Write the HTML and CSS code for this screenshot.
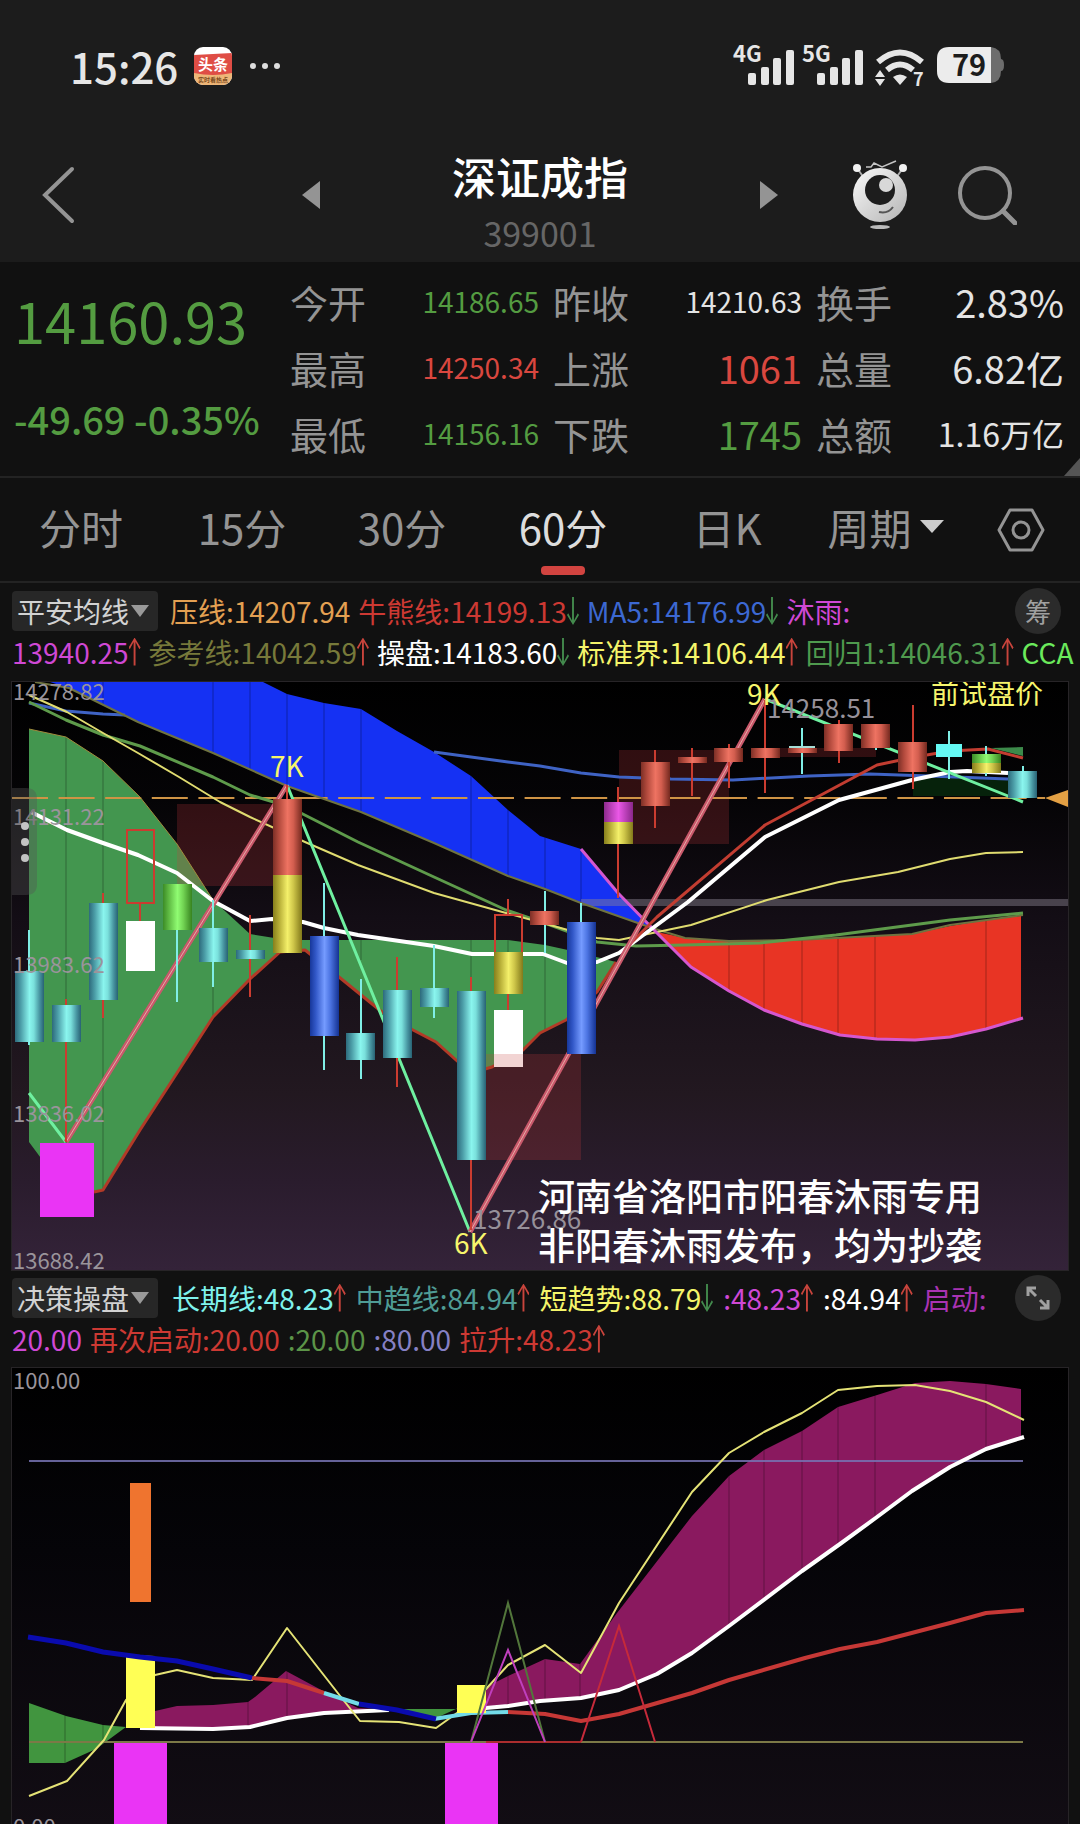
FILE: index.html
```html
<!DOCTYPE html>
<html lang="zh-CN">
<head>
<meta charset="utf-8">
<meta name="viewport" content="width=device-width, initial-scale=1">
<title>深证成指 399001</title>
<link rel="stylesheet" href="styles.css">
</head>
<body>
<header class="top">
  <div class="status">
    <div class="status-side">
      <span class="clock">15:26</span>
      <svg class="app-icon" width="38" height="38" viewBox="0 0 38 38" aria-hidden="true">
        <defs><clipPath id="app"><rect width="38" height="38" rx="9"/></clipPath></defs>
        <g clip-path="url(#app)">
          <rect width="38" height="38" fill="#fff"/>
          <path d="M0 8 38 6V28H0Z" fill="#df4d45"/>
          <path d="M0 26q19 4 38 0v12H0Z" fill="#eeb678"/>
          <text x="19" y="23" class="app-name">头条</text>
          <text x="19" y="35" class="app-sub">实时看热点</text>
        </g>
      </svg>
      <svg width="30" height="8" viewBox="0 0 30 8" fill="#ddd" aria-hidden="true"><circle cx="3" cy="4" r="3"/><circle cx="15" cy="4" r="3"/><circle cx="27" cy="4" r="3"/></svg>
    </div>
    <div class="status-side status-icons">
      <svg width="61" height="42" viewBox="0 0 61 42" fill="#e6e6e6"><text x="0" y="17" class="net">4G</text><rect x="15" y="28" width="8" height="12" rx="2"/><rect x="28" y="22" width="8" height="18" rx="2"/><rect x="40" y="13" width="8" height="27" rx="2"/><rect x="53" y="5" width="8" height="35" rx="2"/></svg>
      <svg width="61" height="42" viewBox="0 0 61 42" fill="#e6e6e6"><text x="0" y="17" class="net">5G</text><rect x="15" y="28" width="8" height="12" rx="2"/><rect x="28" y="22" width="8" height="18" rx="2"/><rect x="40" y="13" width="8" height="27" rx="2"/><rect x="53" y="5" width="8" height="35" rx="2"/></svg>
      <svg class="wifi" width="50" height="42" viewBox="0 0 50 42" fill="none" stroke="#e6e6e6" stroke-width="6"><path d="M3 17q22-19 44 0M12 25q13-11 26 0"/><path d="M18 32q7-5 14 0l-7 8Z" fill="#e6e6e6" stroke="none"/><path d="M0 32l5-7 5 7ZM0 34h10l-5 7Z" fill="#e6e6e6" stroke="none"/><text x="38" y="41" class="gen">7</text></svg>
      <svg width="67" height="42" viewBox="0 0 67 42"><path d="M54 2q10 1 10 12 3 0 3 6t-3 6q0 11-10 12Z" fill="#6d6d6d"/><path d="M12 2H54V38H12Q0 38 0 26V14Q0 2 12 2Z" fill="#ececec"/><text x="32" y="31" class="battery">79</text></svg>
    </div>
  </div>
  <div class="titlebar">
    <button class="icon-btn back" aria-label="返回"><svg width="34" height="60" viewBox="0 0 34 60" fill="none" stroke="#949494" stroke-width="4" stroke-linecap="round"><path d="M30 4 3 30 30 56"/></svg></button>
    <button class="icon-btn" aria-label="上一个"><svg width="18" height="28" viewBox="0 0 18 28"><path d="M18 0V28L0 14Z" fill="#949494"/></svg></button>
    <div class="heading"><h1>深证成指</h1><p>399001</p></div>
    <button class="icon-btn" aria-label="下一个"><svg width="18" height="28" viewBox="0 0 18 28"><path d="M0 0V28L18 14Z" fill="#949494"/></svg></button>
    <button class="icon-btn" aria-label="助手"><svg width="56" height="70" viewBox="0 0 56 70">
      <defs><linearGradient id="bot" x1="0" y1="0" x2="1" y2="1"><stop offset="0" stop-color="#fafafa"/><stop offset="1" stop-color="#b4b4b4"/></linearGradient></defs>
      <path d="M5 8 12 18M51 8 44 18" stroke="#aaa" stroke-width="2"/><circle cx="5" cy="8" r="4" fill="#f2f2f2"/><circle cx="51" cy="8" r="4" fill="#f2f2f2"/>
      <path d="M14 7l5 0 3-4 8 4 14-6" stroke="#c4c4c4" stroke-width="1.5" fill="none"/>
      <circle cx="28" cy="35" r="27" fill="url(#bot)"/><circle cx="28" cy="30" r="15" fill="#1d1d1d"/><circle cx="34" cy="25" r="7" fill="#d8d8d8"/>
      <path d="M27 52q9 2 14-5" stroke="#555" stroke-width="2" fill="none"/><ellipse cx="28" cy="67" rx="10" ry="2" fill="#bbb"/></svg></button>
    <button class="icon-btn" aria-label="搜索"><svg width="60" height="60" viewBox="0 0 60 60" fill="none" stroke="#949494" stroke-width="4"><circle cx="28" cy="28" r="25"/><path d="M46 46 58 58" stroke-linecap="round" stroke-width="5"/></svg></button>
  </div>
</header>

<main>
  <section class="quote">
    <div class="last"><strong>14160.93</strong><span>-49.69 -0.35%</span></div>
    <dl>
      <div><dt>今开</dt><dd class="down small">14186.65</dd></div>
      <div><dt>最高</dt><dd class="up small">14250.34</dd></div>
      <div><dt>最低</dt><dd class="down small">14156.16</dd></div>
    </dl>
    <dl>
      <div><dt>昨收</dt><dd class="small">14210.63</dd></div>
      <div><dt>上涨</dt><dd class="up">1061</dd></div>
      <div><dt>下跌</dt><dd class="down">1745</dd></div>
    </dl>
    <dl>
      <div><dt>换手</dt><dd>2.83%</dd></div>
      <div><dt>总量</dt><dd>6.82亿</dd></div>
      <div><dt>总额</dt><dd class="mid">1.16万亿</dd></div>
    </dl>
    <span class="corner"></span>
  </section>

  <nav class="tabs">
    <button>分时</button><button>15分</button><button>30分</button><button class="active">60分</button><button>日K</button>
    <button class="period">周期<svg width="24" height="13" viewBox="0 0 24 13"><path d="M0 0H24L12 13Z" fill="#ccc"/></svg></button>
    <button class="settings" aria-label="设置"><svg width="48" height="44" viewBox="0 0 48 44" fill="none" stroke="#949494" stroke-width="3"><path d="M13 2H35L46 22 35 42H13L2 22Z" stroke-linejoin="round"/><circle cx="24" cy="22" r="8"/></svg></button>
  </nav>

  <section class="indicator">
    <div class="legend">
      <div class="legend-row">
        <button class="chip">平安均线<svg width="18" height="12" viewBox="0 0 18 12"><path d="M0 0H18L9 12Z" fill="#999"/></svg></button>
        <span class="c-orange">压线:14207.94</span>
        <span class="c-red">牛熊线:14199.13<i class="arrow fall"></i></span>
        <span class="c-blue">MA5:14176.99<i class="arrow fall"></i></span>
        <span class="c-magenta">沐雨:</span>
        <button class="round">筹</button>
      </div>
      <div class="legend-row">
        <span class="c-magenta">13940.25<i class="arrow rise"></i></span>
        <span class="c-olive">参考线:14042.59<i class="arrow rise"></i></span>
        <span class="c-white">操盘:14183.60<i class="arrow fall"></i></span>
        <span class="c-yellow">标准界:14106.44<i class="arrow rise"></i></span>
        <span class="c-green">回归1:14046.31<i class="arrow rise"></i></span>
        <span class="c-lime">CCA</span>
      </div>
    </div>
    <svg class="chart" viewBox="12 682 1056 588" role="img" aria-label="60分钟K线图">
      <defs>
        <linearGradient id="bg1" x1="0" y1="0" x2="0" y2="1"><stop offset="0" stop-color="#000"/><stop offset=".2" stop-color="#050406"/><stop offset=".4" stop-color="#130d15"/><stop offset=".7" stop-color="#221820"/><stop offset=".85" stop-color="#2a1c2d"/><stop offset="1" stop-color="#342339"/></linearGradient>
        <linearGradient id="cy"><stop offset="0" stop-color="#2d6a7c"/><stop offset=".2" stop-color="#4c9ea8"/><stop offset=".5" stop-color="#8af5ee"/><stop offset=".65" stop-color="#7ae0dc"/><stop offset=".85" stop-color="#4794a0"/><stop offset="1" stop-color="#286274"/></linearGradient>
        <linearGradient id="rd"><stop offset="0" stop-color="#7c2f26"/><stop offset=".2" stop-color="#b1493c"/><stop offset=".5" stop-color="#ee7362"/><stop offset=".7" stop-color="#d35e4f"/><stop offset="1" stop-color="#74291f"/></linearGradient>
        <linearGradient id="bl"><stop offset="0" stop-color="#17379a"/><stop offset=".2" stop-color="#3258c8"/><stop offset=".5" stop-color="#759bff"/><stop offset=".7" stop-color="#4c74e2"/><stop offset="1" stop-color="#143292"/></linearGradient>
        <linearGradient id="ye"><stop offset="0" stop-color="#877f1c"/><stop offset=".2" stop-color="#b3aa34"/><stop offset=".5" stop-color="#f4f06a"/><stop offset=".7" stop-color="#cfc74a"/><stop offset="1" stop-color="#82791a"/></linearGradient>
        <linearGradient id="gr"><stop offset="0" stop-color="#3c8c27"/><stop offset=".2" stop-color="#5fba43"/><stop offset=".5" stop-color="#90fc72"/><stop offset=".7" stop-color="#72d353"/><stop offset="1" stop-color="#37831f"/></linearGradient>
        <linearGradient id="mg"><stop offset="0" stop-color="#8c2a8c"/><stop offset=".5" stop-color="#ea58e6"/><stop offset="1" stop-color="#8a278a"/></linearGradient>
        <clipPath id="areas1"><use href="#ga"/><use href="#ba"/><use href="#ra"/></clipPath>
      </defs>
      <rect x="12" y="682" width="1056" height="588" fill="url(#bg1)"/>
      <path id="ga" fill="#43964f" d="M29 729 66 737 103 761 140 797 177 844 213 900 250 934 287 940H508L545 945 577 952 616 962 597 992 566 1020 540 1033 523 1050 492 1067 471 1070 456 1060 436 1042 413 1030 382 1012 339 977 305 950 280 952 250 979 213 1017 177 1073 140 1130 103 1190 95 1192 66 1192 29 1142Z"/>
      <path id="ba" fill="#1531f3" d="M50 682H263L287 694 324 703 361 709 397 731 434 752 471 776 508 810 540 836 581 849 618 893 652 928 581 903 545 889 508 876 434 843 361 812 287 786 213 753 138 722 69 688Z"/>
      <path id="ra" fill="#e83424" d="M657 932 685 938 729 941 798 940 912 934 950 926 986 920 1021 916V1018L986 1029 950 1037 915 1040 877 1039 840 1035 802 1024 764 1010 729 991 691 967Z"/>
      <path class="grid" clip-path="url(#areas1)" d="M66 682V1200M103 682V1200M213 682V1050M250 682V960M287 682V960M324 682V960M361 682V960M471 760V1100M508 800V1080M545 820V1080M581 840V950M729 930V1000M764 930V1012M802 930V1030M838 930V1040M875 930V1042M986 910V1032"/>
      <g fill="#d33a3e" opacity=".22"><rect x="177" y="804" width="99" height="82"/><rect x="619" y="750" width="110" height="94"/><rect x="765" y="748" width="111" height="9"/><rect x="471" y="1054" width="110" height="106"/></g>
      <rect x="913" y="778" width="95" height="18" fill="#06220b"/>
      <rect x="581" y="899" width="487" height="7" fill="#8c8592" opacity=".45"/>
      <path d="M12 798H1045" stroke="#cf9445" stroke-width="2" stroke-dasharray="36 10.6"/>
      <path d="M1045 798 1068 790V807Z" fill="#e3a044"/>
      <g fill="none" stroke-width="2" stroke-linejoin="round">
        <path stroke="#b23a27" stroke-width="3" d="M94 1192 103 1190 140 1130 177 1073 213 1017 250 979 280 952 305 950 339 977 382 1012 413 1030 436 1042 456 1060 471 1073 492 1067 523 1050 540 1033 566 1020 597 992 616 962"/>
        <path stroke="#a08a3c" stroke-width="1" d="M29 729 66 737 103 761 140 797 177 844 213 900"/>
        <path stroke="#3f63c4" stroke-width="3" d="M29 703 66 711 103 714 125 715M434 752 508 762 540 766 581 773 619 777 671 779 733 780 809 776 870 774 929 776 1008 779"/>
        <path stroke="#6f7340" d="M35 682 69 688 138 722 213 753 287 786 361 812 434 843 508 876 545 889 581 903 652 928 685 938 729 941 798 940 912 934 950 925 1023 915"/>
        <path stroke="#5e9b4b" stroke-width="3" d="M29 702 66 720 103 735 140 746 213 777 250 795 287 806 358 842 434 877 506 910 550 925 597 942 636 946 685 945 760 943 836 935 950 920 1023 913"/>
        <path stroke="#e0dc70" d="M29 695 67 712 103 733 138 753 179 777 220 802 250 817 305 842 358 865 434 893 506 913 597 938 619 940 643 935 691 925 767 900 839 882 898 872 950 859 986 853 1023 852"/>
        <path stroke="#d557cf" stroke-width="3" d="M581 849 618 893 657 933 691 967 729 991 764 1010 802 1024 840 1035 877 1039 915 1040 950 1037 986 1029 1023 1018"/>
        <path stroke="#fff" stroke-width="4" d="M31 812 67 830 103 843 138 855 177 873 213 901 250 921 272 919 303 922 324 928 358 935 434 946 472 954H543L567 963 597 962 619 953 688 902 765 837 839 800 912 780 950 772 967 771 1008 773"/>
        <path stroke="#c23d31" stroke-width="3" d="M630 944 657 917 765 825 877 765 915 757 950 751 988 749 1023 758"/>
      </g>
      <path d="M991 748 1023 747V756Z" fill="#3c8a4a"/>
      <rect x="40" y="1143" width="54" height="74" fill="#ea34f5"/>
      <g fill="none" stroke="#6ff0a0" stroke-width="3"><path d="M29 1093 66 1142M287 785 470 1232M765 699 1023 802"/></g>
      <g fill="none"><path d="M66 1142 287 785M470 1232 765 699" stroke="#c9596b" stroke-width="5"/><path d="M66 1142 287 785M470 1232 765 699" stroke="#e8aaa6" stroke-width="1"/></g>
      <g class="wick-r"><path d="M66 999V1142M103 893V1018M140 903V921M250 915V997M287 785V799M397 957V1087M471 977V1230M508 899V914M508 994V1010M618 787V898M655 750V828M692 748V796M729 744V788M765 700V793M839 720V763M913 705V789"/></g>
      <g class="wick-c"><path d="M29 930V1045M177 930V1002M213 900V987M324 883V1070M361 979V1079M434 945V1018M545 891V953M581 903V922M802 728V774M949 731V779M986 746V776M1023 766V772M876 745V750"/></g>
      <g fill="url(#cy)"><rect x="15" y="971" width="29" height="71"/><rect x="52" y="1005" width="29" height="37"/><rect x="89" y="903" width="29" height="97"/><rect x="199" y="928" width="29" height="34"/><rect x="236" y="950" width="29" height="9"/><rect x="346" y="1033" width="29" height="27"/><rect x="383" y="990" width="29" height="68"/><rect x="420" y="988" width="29" height="19"/><rect x="457" y="991" width="29" height="169"/><rect x="1008" y="771" width="29" height="27"/></g>
      <g fill="url(#rd)"><rect x="273" y="799" width="29" height="76"/><rect x="530" y="911" width="29" height="14"/><rect x="641" y="762" width="29" height="44"/><rect x="678" y="757" width="29" height="6"/><rect x="714" y="748" width="29" height="14"/><rect x="751" y="748" width="29" height="10"/><rect x="788" y="748" width="29" height="5"/><rect x="824" y="724" width="29" height="27"/><rect x="861" y="724" width="29" height="24"/><rect x="898" y="742" width="29" height="30"/></g>
      <g fill="url(#bl)"><rect x="310" y="936" width="29" height="100"/><rect x="567" y="922" width="29" height="132"/></g>
      <g fill="url(#ye)"><rect x="273" y="875" width="29" height="78"/><rect x="494" y="952" width="29" height="42"/><rect x="604" y="822" width="29" height="22"/><rect x="972" y="763" width="29" height="10"/></g>
      <g fill="url(#gr)"><rect x="163" y="884" width="29" height="46"/><rect x="972" y="754" width="29" height="9"/></g>
      <rect x="604" y="802" width="29" height="20" fill="url(#mg)"/>
      <rect x="936" y="744" width="26" height="13" fill="#65f9f4"/><rect x="789" y="746" width="26" height="2" fill="#a7ddd6"/>
      <g fill="#fff"><rect x="126" y="921" width="29" height="50"/><rect x="494" y="1010" width="29" height="57"/></g>
      <rect x="494" y="1054" width="29" height="13" fill="#f2d4d3"/>
      <path d="M127 830H154V903H127ZM495 952V915H522V952" fill="none" stroke="#cb3c30" stroke-width="2"/>
      <g class="axis"><text x="13" y="700">14278.82</text><text x="13" y="825">14131.22</text><text x="13" y="973">13983.62</text><text x="13" y="1122">13836.02</text><text x="13" y="1269">13688.42</text></g>
      <g class="peak"><text x="473" y="1229">13726.86</text><text x="767" y="718">14258.51</text></g>
      <g class="mark"><text x="270" y="777">7K</text><text x="747" y="705">9K</text><text x="454" y="1254">6K</text><text x="931" y="704">前试盘价</text></g>
      <g class="notice"><text x="538" y="1211">河南省洛阳市阳春沐雨专用</text><text x="538" y="1260">非阳春沐雨发布，均为抄袭</text></g>
      <path d="M12 788H26Q37 788 37 799V884Q37 895 26 895H12Z" fill="#555" opacity=".38"/>
      <g fill="#c3c3c3"><circle cx="25" cy="826" r="4"/><circle cx="25" cy="842" r="4"/><circle cx="25" cy="858" r="4"/></g>
    </svg>
  </section>

  <section class="indicator">
    <div class="legend">
      <div class="legend-row wide">
        <button class="chip">决策操盘<svg width="18" height="12" viewBox="0 0 18 12"><path d="M0 0H18L9 12Z" fill="#999"/></svg></button>
        <span class="c-cyan">长期线:48.23<i class="arrow rise"></i></span>
        <span class="c-teal">中趋线:84.94<i class="arrow rise"></i></span>
        <span class="c-yellow">短趋势:88.79<i class="arrow fall"></i></span>
        <span class="c-magenta">:48.23<i class="arrow rise"></i></span>
        <span class="c-white">:84.94<i class="arrow rise"></i></span>
        <span class="c-purple">启动:</span>
        <button class="round" aria-label="展开"><svg width="24" height="24" viewBox="0 0 24 24" fill="none" stroke="#a0a0a0" stroke-width="3"><path d="M10 2H2V10M2 2 10 10M14 22H22V14M22 22 14 14"/></svg></button>
      </div>
      <div class="legend-row">
        <span class="c-magenta">20.00</span>
        <span class="c-red">再次启动:20.00</span>
        <span class="c-leaf">:20.00</span>
        <span class="c-violet">:80.00</span>
        <span class="c-red">拉升:48.23<i class="arrow rise"></i></span>
      </div>
    </div>
    <svg class="chart" viewBox="12 1366 1056 458" role="img" aria-label="决策操盘指标图">
      <defs>
        <linearGradient id="bg2" x1="0" y1="0" x2="0" y2="1"><stop offset="0" stop-color="#000"/><stop offset=".4" stop-color="#050408"/><stop offset="1" stop-color="#120d14"/></linearGradient>
        <clipPath id="areas2"><use href="#pa"/><use href="#gb"/></clipPath>
      </defs>
      <rect x="12" y="1366" width="1056" height="458" fill="url(#bg2)"/>
      <path id="gb" fill="#41953f" d="M29 1701 66 1714 103 1723 126 1725 96 1747 65 1761H29ZM401 1707H456L436 1716Z"/>
      <path id="pa" fill="#8a195f" d="M155 1709 177 1704 213 1703 248 1700 255 1695 286 1669 325 1690 358 1706 389 1708 324 1711 287 1716 250 1725 213 1727 155 1726ZM486 1685 508 1674 545 1657 580 1662 617 1611 692 1514 729 1474 764 1448 802 1429 838 1405 874 1394 915 1381 950 1379 986 1382 1021 1387V1436L986 1447 950 1465 912 1489 877 1515 840 1542 802 1569 729 1624 692 1651 657 1672 619 1688 581 1696 540 1699 486 1706Z"/>
      <path class="grid" clip-path="url(#areas2)" d="M65 1690V1770M103 1690V1770M248 1690V1730M287 1660V1730M508 1660V1710M545 1650V1710M580 1650V1710M729 1460V1630M764 1440V1610M802 1420V1580M838 1400V1550M875 1380V1520M986 1370V1450"/>
      <path d="M29 1459H1023" stroke="#7773b4" stroke-width="2" opacity=".85"/>
      <path d="M29 1740H1023" stroke="#7c7947" stroke-width="2"/><path d="M486 1740H581" stroke="#ab2d2e" stroke-width="2"/>
      <g fill="none" stroke-linejoin="round">
        <path stroke="#fff" stroke-width="4" d="M140 1726 213 1727 250 1725 287 1716 324 1711 389 1708M457 1708 486 1706 508 1704 540 1699 581 1696 619 1688 657 1672 692 1651 729 1624 802 1569 840 1542 877 1515 912 1489 950 1465 986 1447 1024 1435"/>
        <path stroke="#e5e376" stroke-width="2" d="M29 1794 67 1779 104 1738 126 1698 155 1673 177 1668 213 1676 252 1678 287 1626 337 1690 360 1719 399 1720 436 1726 457 1711 486 1687 508 1663 545 1643 581 1671 619 1601 692 1490 729 1451 764 1430 802 1411 838 1388 877 1384 915 1383 950 1389 986 1400 1024 1418"/>
        <g stroke-width="4"><path stroke="#c63836" d="M252 1676 287 1679 324 1691M508 1710 545 1712 581 1719 619 1712 692 1691 729 1678 805 1656 840 1647 877 1640 950 1621 986 1611 1024 1608"/>
        <path stroke="#73dbe8" d="M324 1691 359 1702M434 1717 471 1711 508 1710"/>
        <path stroke="#fff" stroke-width="2" d="M126 1654 155 1655"/></g>
      </g>
      <rect x="130" y="1481" width="21" height="119" fill="#ef742f"/>
      <g fill="#ffff55"><rect x="126" y="1655" width="29" height="71"/><rect x="457" y="1683" width="29" height="28"/></g>
      <path fill="none" stroke="#0a0bae" stroke-width="5" d="M28 1635 66 1641 103 1650 140 1655 177 1659 213 1667 252 1676M359 1702 397 1708 436 1717"/>
      <g fill="#ea34f5"><rect x="114" y="1741" width="53" height="83"/><rect x="445" y="1741" width="53" height="83"/></g>
      <g fill="none" stroke-width="2"><path stroke="#52763b" d="M471 1740 508 1601 545 1740"/><path stroke="#bf3fbd" d="M471 1740 508 1648 545 1740"/><path stroke="#c62a3a" d="M581 1740 619 1624 655 1740"/></g>
      <g class="axis"><text x="13" y="1387">100.00</text><text x="13" y="1833">0.00</text></g>
    </svg>
  </section>
</main>
</body>
</html>
```
FILE: styles.css
```css
* { box-sizing: border-box; }

body {
  margin: 0;
  background: #111;
  color: #e4e4e4;
  font-family: "Noto Sans CJK SC", sans-serif;
  font-size: 28px;
  overflow-x: hidden;
}

h1, p, dl, dd { margin: 0; }
svg { display: block; flex: none; }
button {
  padding: 0;
  border: 0;
  background: none;
  color: inherit;
  font: inherit;
}

/* Status bar and title */
.top { background: #1c1c1c; }
.status {
  display: flex;
  justify-content: space-between;
  align-items: center;
  height: 132px;
  padding: 0 76px 0 70px;
}
.status svg { overflow: visible; }
.status-side { display: flex; align-items: center; }
.clock { font-size: 42px; font-weight: 500; line-height: 48px; color: #e6e6e6; }
.app-icon { margin: 0 18px 0 16px; }
.app-name { font-size: 15px; font-weight: 700; fill: #fff; text-anchor: middle; }
.app-sub { font-size: 6px; font-weight: 700; fill: #7b4a20; text-anchor: middle; }
.status-icons { gap: 8px; }
.net { font-size: 22px; font-weight: 700; }
.wifi { margin: 0 4px; }
.gen { font-size: 18px; font-weight: 700; fill: #e6e6e6; stroke: none; }
.battery { font-size: 29px; font-weight: 700; fill: #1c1c1c; text-anchor: middle; }

.titlebar {
  display: grid;
  grid-template-columns: 262fr 98fr 360fr 98fr 124fr 90fr 48fr;
  align-items: center;
  height: 130px;
  padding-bottom: 6px;
}
.icon-btn { display: flex; justify-content: center; }
.back { justify-content: flex-start; padding-left: 42px; }
.heading { padding-top: 12px; text-align: center; }
.heading h1 { font-size: 44px; font-weight: 500; line-height: 64px; color: #fff; }
.heading p { font-size: 34px; line-height: 50px; color: #666; }

/* Quote figures */
.quote {
  position: relative;
  display: grid;
  grid-template-columns: 262fr 249fr 249fr 248fr;
  column-gap: 14px;
  padding: 6px 16px 10px 14px;
  border-bottom: 2px solid #232323;
}
.last { display: flex; flex-direction: column; color: #549c41; white-space: nowrap; }
.last strong { font-size: 56px; font-weight: 400; line-height: 104px; }
.last span { font-size: 38px; font-weight: 500; line-height: 94px; }
.quote dl > div { display: flex; justify-content: space-between; align-items: center; height: 66px; }
.quote dt { font-size: 38px; color: #949494; }
.quote dd { font-size: 38px; font-weight: 400; white-space: nowrap; }
.quote .small { font-size: 28px; }
.quote .mid { font-size: 32px; }
.quote .up { color: #d9473f; }
.quote .down { color: #549c41; }
.corner {
  position: absolute;
  right: 0;
  bottom: 0;
  width: 16px;
  height: 18px;
  background: #555;
  clip-path: polygon(100% 0, 100% 100%, 0 100%);
}

/* Period tabs */
.tabs {
  display: grid;
  grid-template-columns: 162fr 160fr 160fr 162fr 166fr 151fr 119fr;
  height: 105px;
  border-bottom: 2px solid #232323;
}
.tabs button {
  position: relative;
  display: flex;
  justify-content: center;
  align-items: center;
  padding-bottom: 6px;
  font-size: 42px;
  color: #949494;
}
.tabs .settings { padding: 0; }
.tabs .active { color: #ddd; }
.tabs .active::after {
  content: "";
  position: absolute;
  bottom: 6px;
  width: 44px;
  height: 9px;
  border-radius: 4px;
  background: #d24440;
}
.tabs .period { gap: 8px; }

/* Indicator legends */
.indicator { padding: 0 12px; }
.legend { padding: 7px 0 9px; }
.indicator:first-of-type .legend, .tabs + .indicator .legend { padding-bottom: 10px; }
.legend-row { display: flex; align-items: center; gap: 8px; height: 41px; line-height: 40px; white-space: nowrap; }
.legend-row.wide { gap: 10px; }
.legend-row span { display: flex; align-items: center; flex: none; }
.chip {
  display: flex;
  align-items: center;
  flex: none;
  gap: 2px;
  width: 146px;
  height: 40px;
  margin-right: 4px;
  padding-left: 5px;
  border-radius: 4px;
  background: #272727;
  color: #d2d2d2;
}
.round {
  display: flex;
  justify-content: center;
  align-items: center;
  flex: none;
  width: 46px;
  height: 46px;
  margin: 0 7px 0 auto;
  border-radius: 50%;
  background: #2b2b2b;
  color: #a0a0a0;
  font-size: 26px;
}
.arrow { width: 12px; height: 28px; background: #c8443c; clip-path: polygon(50% 0, 100% 36%, 90% 42%, 58% 16%, 58% 100%, 42% 100%, 42% 16%, 10% 42%, 0 36%); }
.arrow.fall { background: #438a4d; transform: rotate(180deg); }
.c-orange { color: #e3a052; }
.c-red { color: #cd3933; }
.c-blue { color: #3c68d2; }
.c-magenta { color: #cf48d5; }
.c-purple { color: #a933b3; }
.c-olive { color: #77793a; }
.c-white { color: #fff; }
.c-yellow { color: #f5f56a; }
.c-green { color: #4f9a4e; }
.c-lime { color: #6bea5c; }
.c-cyan { color: #7ef2ec; }
.c-teal { color: #4f9c95; }
.c-leaf { color: #5c9448; }
.c-violet { color: #8580c4; }

/* Charts */
.chart { width: 100%; height: auto; outline: 1px solid #272427; }
.grid { fill: none; stroke: #000; stroke-width: 1; opacity: .3; }
.axis { font-size: 22px; fill: #9a949b; }
.peak { font-size: 26px; fill: #97919a; }
.mark { font-size: 28px; fill: #f7f56c; }
.notice { font-size: 37px; font-weight: 500; fill: #fff; }
.wick-r { stroke: #cb3c30; stroke-width: 2; }
.wick-c { stroke: #80eee6; stroke-width: 2; }
```
